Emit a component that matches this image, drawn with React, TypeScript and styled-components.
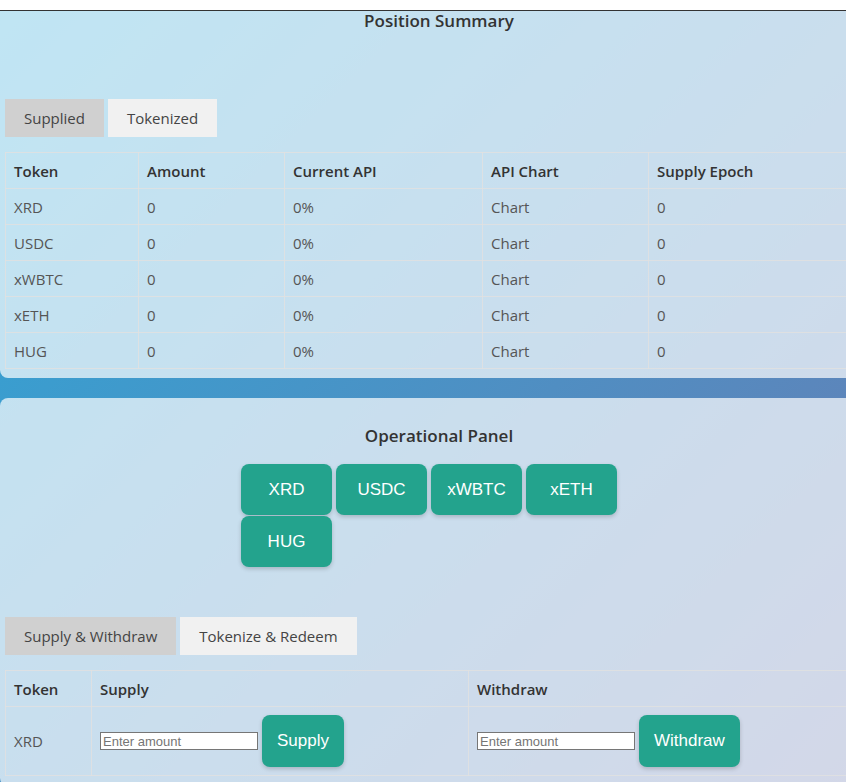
import React from "react";
import styled, { createGlobalStyle } from "styled-components";

const Global = createGlobalStyle`
  html, body {
    margin: 0;
    padding: 0;
    overflow: hidden;
  }
  html {
    min-height: 100%;
    background: linear-gradient(135deg, #2ba8d8 0%, #6b7bb2 100%);
    background-attachment: fixed;
  }
  body {
    font-family: "Open Sans", "Liberation Sans", sans-serif;
    color: #333;
  }
`;

const TopStrip = styled.div`
  height: 10px;
  background: #ffffff;
  border-bottom: 1px solid #333;
`;

const Page = styled.div`
  width: 878px;
  display: flex;
  flex-direction: column;
  gap: 20px;
`;

const Card = styled.section<{ $top?: boolean }>`
  background: rgba(255, 255, 255, 0.7);
  border-radius: ${(p) => (p.$top ? "0 0 8px 8px" : "8px")};
  padding: ${(p) => (p.$top ? "0 5px 9px" : "28px 5px 10px")};
  display: flex;
  flex-direction: column;
`;

const Title = styled.h2`
  margin: 0;
  font-size: 17px;
  line-height: 20px;
  font-weight: 600;
  text-align: center;
  color: #333;
`;

const Tabs = styled.div<{ $mt: number }>`
  display: flex;
  gap: 4px;
  margin-top: ${(p) => p.$mt}px;
  margin-bottom: 15px;
`;

const Tab = styled.button<{ $active?: boolean }>`
  font-family: "Open Sans", "Liberation Sans", sans-serif;
  font-size: 15px;
  line-height: 18px;
  color: #444;
  border: none;
  padding: 10px 19px;
  background: ${(p) => (p.$active ? "#d0d0d0" : "#f1f1f1")};
  cursor: pointer;
`;

const Table = styled.table`
  width: 100%;
  border-collapse: collapse;
  table-layout: fixed;
`;

const Th = styled.th<{ $w?: number }>`
  text-align: left;
  font-size: 15px;
  line-height: 19px;
  font-weight: 600;
  color: #333;
  padding: 9px 8px 7px;
  border: 1px solid rgba(225, 225, 225, 0.85);
  width: ${(p) => (p.$w ? `${p.$w}px` : "auto")};
`;

const Td = styled.td`
  font-size: 15px;
  line-height: 19px;
  color: #555;
  padding: 9px 8px 7px;
  border: 1px solid rgba(225, 225, 225, 0.85);
  vertical-align: middle;
`;

const ActionTd = styled(Td)`
  padding: 8px;
`;

const TokenGrid = styled.div`
  width: 400px;
  margin: 18px auto 0;
  display: flex;
  flex-wrap: wrap;
  column-gap: 4px;
  row-gap: 1px;
  padding-left: 2px;
  box-sizing: border-box;
`;

const TokenButton = styled.button`
  width: 91px;
  height: 51px;
  border: none;
  border-radius: 8px;
  background: #23a38d;
  color: #fff;
  font-family: "Liberation Sans", Arial, sans-serif;
  font-size: 17px;
  box-shadow: 0 2px 4px rgba(0, 0, 0, 0.18);
  cursor: pointer;
`;

const ActionCell = styled.div`
  display: flex;
  align-items: center;
  gap: 4px;
`;

const AmountInput = styled.input`
  width: 158px;
  height: 18px;
  box-sizing: border-box;
  border: 1px solid #767676;
  padding: 1px 2px;
  font-family: "Liberation Sans", Arial, sans-serif;
  font-size: 13px;
  background: #fff;
  &::placeholder {
    color: #757575;
  }
`;

const ActionButton = styled.button`
  border: none;
  border-radius: 8px;
  background: #23a38d;
  color: #fff;
  font-family: "Liberation Sans", Arial, sans-serif;
  font-size: 17px;
  line-height: 20px;
  padding: 16px 15px;
  box-shadow: 0 2px 4px rgba(0, 0, 0, 0.18);
  cursor: pointer;
`;

const tokens = ["XRD", "USDC", "xWBTC", "xETH", "HUG"];

export default function App() {
  return (
    <>
      <Global />
      <TopStrip />
      <Page>
        <Card $top>
          <Title>Position Summary</Title>
          <Tabs $mt={68}>
            <Tab $active>Supplied</Tab>
            <Tab>Tokenized</Tab>
          </Tabs>
          <Table>
            <thead>
              <tr>
                <Th $w={116}>Token</Th>
                <Th $w={129}>Amount</Th>
                <Th $w={181}>Current API</Th>
                <Th $w={149}>API Chart</Th>
                <Th>Supply Epoch</Th>
              </tr>
            </thead>
            <tbody>
              {tokens.map((t) => (
                <tr key={t}>
                  <Td>{t}</Td>
                  <Td>0</Td>
                  <Td>0%</Td>
                  <Td>Chart</Td>
                  <Td>0</Td>
                </tr>
              ))}
            </tbody>
          </Table>
        </Card>
        <Card>
          <Title>Operational Panel</Title>
          <TokenGrid>
            {tokens.map((t) => (
              <TokenButton key={t}>{t}</TokenButton>
            ))}
          </TokenGrid>
          <Tabs $mt={50}>
            <Tab $active>Supply &amp; Withdraw</Tab>
            <Tab>Tokenize &amp; Redeem</Tab>
          </Tabs>
          <Table>
            <thead>
              <tr>
                <Th $w={69}>Token</Th>
                <Th $w={360}>Supply</Th>
                <Th>Withdraw</Th>
              </tr>
            </thead>
            <tbody>
              <tr>
                <ActionTd>XRD</ActionTd>
                <ActionTd>
                  <ActionCell>
                    <AmountInput placeholder="Enter amount" />
                    <ActionButton>Supply</ActionButton>
                  </ActionCell>
                </ActionTd>
                <ActionTd>
                  <ActionCell>
                    <AmountInput placeholder="Enter amount" />
                    <ActionButton>Withdraw</ActionButton>
                  </ActionCell>
                </ActionTd>
              </tr>
            </tbody>
          </Table>
        </Card>
      </Page>
    </>
  );
}
